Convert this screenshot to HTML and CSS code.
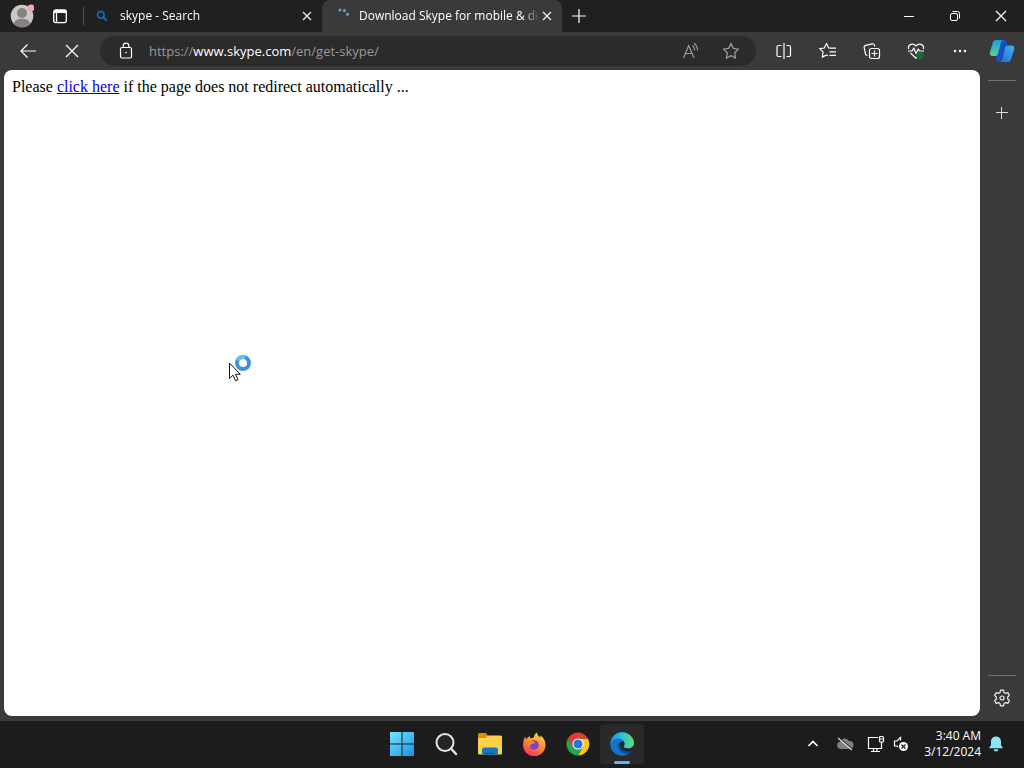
FILE: index.html
```html
<!DOCTYPE html>
<html lang="en">
    <head>
        <meta charset="UTF-8" />
        <title>Download Skype for mobile &amp; desktop</title>
        <link rel="stylesheet" href="styles.css">
    </head>
    <body>

        <header class="tab-bar">
            <button class="profile" aria-label="Profile">
                <svg width="24" height="24" viewBox="0 0 24 24">
                    <circle cx="12" cy="12" r="11.3" fill="#c9c8c7"/>
                    <circle cx="12" cy="9" r="5" fill="#85817f"/>
                    <path d="M4 20c0-7 16-7 16 0a11 11 0 0 1-16 0z" fill="#85817f"/>
                    <circle cx="21" cy="4" r="3.4" fill="#f3a5b2"/>
                </svg>
            </button>
            <button class="workspaces" aria-label="Tab actions">
                <svg width="16" height="16" viewBox="0 0 16 16" fill="none" stroke="#fff" stroke-width="1.3">
                    <rect x="1.7" y="2" width="12.6" height="12.6" rx="2"/>
                    <path d="M2 3.5h12" stroke-width="3"/>
                    <path d="M4.5 4v10"/>
                </svg>
            </button>
            <span class="divider"></span>
            <div class="tab">
                <svg class="tab-icon" width="12" height="12" viewBox="0 0 12 12" fill="none" stroke="#1b66ac" stroke-width="1.8">
                    <circle cx="4.8" cy="4.8" r="3.3"/>
                    <path d="M7.2 7.2l3.6 3.6" stroke-width="2.2"/>
                </svg>
                <span class="tab-title">skype - Search</span>
                <button class="tab-close" aria-label="Close tab">
                    <svg width="10" height="10" viewBox="0 0 10 10" stroke="#eee" stroke-width="1.3"><path d="M1 1l8 8M9 1l-8 8"/></svg>
                </button>
            </div>
            <div class="tab active">
                <svg class="tab-icon" width="16" height="16" viewBox="0 0 16 16" fill="#6ba3bd">
                    <circle cx="4" cy="2" r="1.5"/>
                    <circle cx="8.5" cy="2.6" r="1.5"/>
                    <circle cx="11.5" cy="6.3" r="1.5"/>
                </svg>
                <span class="tab-title">Download Skype for mobile &amp; desktop</span>
                <button class="tab-close" aria-label="Close tab">
                    <svg width="10" height="10" viewBox="0 0 10 10" stroke="#eee" stroke-width="1.3"><path d="M1 1l8 8M9 1l-8 8"/></svg>
                </button>
            </div>
            <button class="new-tab" aria-label="New tab">
                <svg width="14" height="14" viewBox="0 0 14 14" stroke="#fff" stroke-width="1.2"><path d="M7 0v14M0 7h14"/></svg>
            </button>
            <div class="window-buttons">
                <button aria-label="Minimize">
                    <svg width="10" height="10" viewBox="0 0 10 10" stroke="#fff"><path d="M0 5.5h10"/></svg>
                </button>
                <button aria-label="Restore">
                    <svg width="12" height="12" viewBox="0 0 12 12" fill="none" stroke="#fff">
                        <rect x="1.5" y="3.5" width="7" height="7" rx="1.5"/>
                        <path d="M3.5 1.5h5a2 2 0 0 1 2 2v5"/>
                    </svg>
                </button>
                <button aria-label="Close">
                    <svg width="12" height="12" viewBox="0 0 12 12" stroke="#fff" stroke-width="1.2"><path d="M1 1l10 10M11 1L1 11"/></svg>
                </button>
            </div>
        </header>

        <nav class="toolbar">
            <button class="tool" aria-label="Back">
                <svg width="18" height="18" viewBox="0 0 18 18" fill="none" stroke="#fff" stroke-width="1.2"><path d="M17 9H2M8.5 2.5L2 9l6.5 6.5"/></svg>
            </button>
            <button class="tool" aria-label="Stop">
                <svg width="14" height="14" viewBox="0 0 14 14" stroke="#fff" stroke-width="1.2"><path d="M1 1l12 12M13 1L1 13"/></svg>
            </button>
            <div class="address">
                <svg width="14" height="18" viewBox="0 0 14 18" fill="none" stroke="#fff" stroke-width="1.2">
                    <rect x="1.5" y="5.5" width="11" height="10.5" rx="1.5"/>
                    <path d="M4.2 5.5V4a2.8 2.8 0 0 1 5.6 0v1.500"/>
                    <circle cx="7" cy="10.5" r=".6" fill="#fff" stroke-width=".5"/>
                </svg>
                <span class="url">https://<b>www.skype.com</b>/en/get-skype/</span>
                <button aria-label="Read aloud">
                    <svg width="18" height="18" viewBox="0 0 18 18" fill="none" stroke="#9a9a9a" stroke-width="1.2">
                        <path d="M1.5 16L6.7 3.5 12 16M3.5 11.5h6.6"/>
                        <path d="M10.5 3.5a6 6 0 0 1 2.2 5M12 1.2a9 9 0 0 1 3.6 7.3"/>
                    </svg>
                </button>
                <button aria-label="Add to favorites">
                    <svg width="18" height="18" viewBox="0 0 18 18" fill="none" stroke="#9a9a9a" stroke-width="1.3" stroke-linejoin="round">
                        <path d="M9 1.5l2.3 4.9 5.2.7-3.8 3.7.9 5.4L9 13.6l-4.6 2.6.9-5.4L1.5 7.1l5.2-.7z"/>
                    </svg>
                </button>
            </div>
            <button class="tool" aria-label="Split screen">
                <svg width="18" height="18" viewBox="0 0 18 18" fill="none" stroke="#fff" stroke-width="1.2">
                    <path d="M6.5 3.5h-3A1.500 1.500 0 0 0 2 5v8a1.500 1.500 0 0 0 1.500 1.500h3M11.500 3.500H14A1.500 1.500 0 0 1 15.500 5v8a1.500 1.500 0 0 1-1.500 1.500h-2.500M9 1v16"/>
                </svg>
            </button>
            <button class="tool" aria-label="Favorites">
                <svg width="18" height="18" viewBox="0 0 18 18" fill="none" stroke="#fff" stroke-width="1.2" stroke-linejoin="round">
                    <path d="M10.5 6.2L9.700 6 7.500 1.500 5.300 6l-4.600.7 3.400 3.400-.8 5L7.500 13l1.500.7"/>
                    <path d="M10.5 6.2H17M10.500 9.800H17M10.500 13.400H17"/>
                </svg>
            </button>
            <button class="tool" aria-label="Collections">
                <svg width="18" height="18" viewBox="0 0 18 18" fill="none" stroke="#fff" stroke-width="1.2">
                    <rect x="6.5" y="6.5" width="10" height="10" rx="2"/>
                    <path d="M11.5 8.5v6M8.5 11.5h6M4.5 13.5a2 2 0 0 1-2-1.6L1.200 5.600a2 2 0 0 1 1.500-2.300l6.500-1.500a2 2 0 0 1 2.300 1.500l.2 1"/>
                </svg>
            </button>
            <button class="tool" aria-label="Browser essentials">
                <svg width="18" height="18" viewBox="0 0 18 18" fill="none" stroke="#fff" stroke-width="1.2" stroke-linejoin="round">
                    <path d="M1.5 7C.8 2 6.500.8 9 4c2.500-3.200 8.200-2 7.500 3M3.500 11L9 16.200l1.500-1.400"/>
                    <path d="M1 9h4l1.800-3L9 11.500 11.300 7l1.200 2H17"/>
                    <circle cx="13" cy="13.500" r="3.700" fill="#12702c" stroke="none"/>
                </svg>
            </button>
            <button class="tool" aria-label="Settings and more">
                <svg width="16" height="16" viewBox="0 0 16 16" fill="#fff"><circle cx="3" cy="8" r="1.2"/><circle cx="8" cy="8" r="1.2"/><circle cx="13" cy="8" r="1.2"/></svg>
            </button>
            <button class="copilot" aria-label="Copilot">
                <svg width="26" height="24" viewBox="0 0 26 24">
                    <defs>
                        <linearGradient id="copilotLeft" x1="0" y1="0" x2="0" y2="1">
                            <stop offset="0" stop-color="#1d9ce0"/>
                            <stop offset="1" stop-color="#5fd08e"/>
                        </linearGradient>
                        <linearGradient id="copilotRight" x1="0" y1="1" x2="1" y2="0">
                            <stop offset="0" stop-color="#2166e8"/>
                            <stop offset="1" stop-color="#3fb4f6"/>
                        </linearGradient>
                    </defs>
                    <path d="M7 1h8q2.500 0 3 2.500l.8 3H16L11.500 23H10q-2 0-2.500-2L6 15z" fill="#1550c8"/>
                    <path d="M7 1h7q-1.500.5-2 2L9 15q-.6 2-2.600 2H4q-4 0-3-4L4 3q.8-2 3-2z" fill="url(#copilotLeft)"/>
                    <path d="M18 6.500h4q4 0 3 4l-3 10q-.8 2.500-3 2.500h-8q1.500-.5 2-2.500l3-12q.5-2 2-2z" fill="url(#copilotRight)"/>
                </svg>
            </button>
        </nav>

        <div class="browser-body">
            <main class="page">
                Please <a href="#">click here</a> if the page does not redirect automatically ...
            </main>
            <aside class="sidebar">
                <hr>
                <button aria-label="Customize">
                    <svg width="12" height="12" viewBox="0 0 12 12" stroke="#ddd"><path d="M5.500 0v12M0 5.500h12"/></svg>
                </button>
                <hr class="bottom-line">
                <button aria-label="Settings">
                    <svg width="18" height="18" viewBox="0 0 18 18" fill="none" stroke="#eee" stroke-width="1.2" stroke-linejoin="round">
                        <path d="M7.5 1.2h3l.5 2.300 1.600.9 2.200-.8 1.600 2.700-1.700 1.700v2l1.700 1.700-1.600 2.700-2.200-.8-1.600.9-.5 2.300h-3L7 14.500l-1.600-.9-2.200.8-1.600-2.700L3.300 10V8L1.600 6.300l1.600-2.700 2.200.8L7 3.500z"/>
                        <circle cx="9" cy="9" r="2"/>
                    </svg>
                </button>
            </aside>
        </div>

        <footer class="taskbar">
            <div class="apps">
                <button aria-label="Start">
                    <svg width="24" height="24" viewBox="0 0 24 24">
                        <linearGradient id="winFill" gradientUnits="userSpaceOnUse" x1="0" y1="0" x2="24" y2="24">
                            <stop offset="0" stop-color="#79e4fb"/>
                            <stop offset="1" stop-color="#1593e8"/>
                        </linearGradient>
                        <path d="M0 0h11.500v11.500H0zM12.500 0H24v11.500H12.500zM0 12.500h11.500V24H0zM12.500 12.500H24V24H12.500z" fill="url(#winFill)"/>
                    </svg>
                </button>
                <button aria-label="Search">
                    <svg width="24" height="24" viewBox="0 0 24 24" fill="none" stroke="#e4e4e4">
                        <circle cx="11" cy="10.5" r="8.500" fill="#242424" stroke-width="2"/>
                        <path d="M17 16.500l5 5.500" stroke-width="2.500" stroke-linecap="round"/>
                    </svg>
                </button>
                <button aria-label="File Explorer">
                    <svg width="24" height="24" viewBox="0 0 24 24">
                        <path d="M0 2.500Q0 1 1.500 1h6L10 3.500V8H0z" fill="#d98e10"/>
                        <path d="M0 6h7.500L10 3.500h12.500q1.500 0 1.500 1.500v16q0 1.500-1.500 1.500h-21Q0 22.500 0 21z" fill="#ffd04c"/>
                        <path d="M4 22.500V18q0-2.500 2.500-2.500h11q2.500 0 2.500 2.500v4.500z" fill="#1576c5"/>
                        <path d="M7 22.500V21.500q0-1 1-1h8q1 0 1 1v1z" fill="#0d61ab"/>
                    </svg>
                </button>
                <button aria-label="Firefox">
                    <svg width="24" height="24" viewBox="0 0 24 24">
                        <linearGradient id="foxFill" x1=".8" y1="0" x2=".3" y2="1">
                            <stop offset="0" stop-color="#ffe14a"/>
                            <stop offset=".5" stop-color="#ff8a26"/>
                            <stop offset="1" stop-color="#f7306b"/>
                        </linearGradient>
                        <path d="M3 4.500l1 2.700L7.500 4l1.200 2.500L12 5.200Q12 2 14.800.5q.6 3.300 3.200 5l.7-2q4.800 4 4.800 9.500a11.200 11.200 0 0 1-22.500 0Q1 8 3 4.500z" fill="url(#foxFill)"/>
                        <circle cx="12" cy="13" r="4.800" fill="#7b45d1"/>
                        <path d="M5.500 8.500q4-.5 6 1.200l2 .5q-1 1.500-3.500 1.500-2.500 1-2 4-2.500-2-2.500-7.200z" fill="#ff8a2c"/>
                    </svg>
                </button>
                <button aria-label="Chrome">
                    <svg width="24" height="24" viewBox="0 0 24 24">
                        <path d="M12 6.500h9.960A11.500 11.500 0 0 1 12 23.500l4.800-8.700z" fill="#fcc61b"/>
                        <path d="M2.040 6.250A11.500 11.500 0 0 0 12 23.500l4.800-8.700L12 12l-4.800 2.800z" fill="#2ba24c"/>
                        <path d="M2.040 6.250Q5.500 1 12 .5q6.500.5 9.960 6H12L7 14.800z" fill="#e23c31"/>
                        <circle cx="12" cy="12" r="5.600" fill="#fff"/>
                        <circle cx="12" cy="12" r="4.500" fill="#2872e5"/>
                    </svg>
                </button>
                <button class="running" aria-label="Edge">
                    <svg width="24" height="24" viewBox="0 0 24 24">
                        <linearGradient id="edgeTop" x1="0" y1="0" x2="1" y2="0">
                            <stop offset="0" stop-color="#1794dc"/>
                            <stop offset=".5" stop-color="#2fc0d8"/>
                            <stop offset="1" stop-color="#65dc65"/>
                        </linearGradient>
                        <circle cx="12" cy="12" r="11.8" fill="#1273c8"/>
                        <path d="M.3 12C1 5 6 .2 12 .2c7 0 12 5.500 12 10.500 0 3.500-2.500 5.800-6 5.800-3 0-4.500-1-4.500-2 0-.8 1-1 1-3C14.500 9 12 6.500 8.500 6.500c-4 0-7 2-8.200 5.500z" fill="url(#edgeTop)"/>
                        <path d="M9 9.800c-2.500 5 1 12 7.500 12.200 2 0 4-.9 5.200-2.500.8-1-.2-1.700-1.200-1.200-5 2-11-.8-11.500-8.500z" fill="#0b4a91"/>
                        <path d="M14.5 11.500c0 2-1 2.200-1 3s1.500 2 4.500 2c2.200 0 4-.8 5-2.200l1.500 1-2.500 3.500q-3 1.200-6.500.2c-4-1-6.200-4-5.700-7.500 1-3 4.700-3 4.700 0z" fill="#242424"/>
                    </svg>
                </button>
            </div>
            <div class="tray">
                <button aria-label="Show hidden icons">
                    <svg width="12" height="12" viewBox="0 0 12 12" fill="none" stroke="#fff" stroke-width="1.6"><path d="M1.5 8L6 3.500 10.500 8"/></svg>
                </button>
                <button aria-label="OneDrive">
                    <svg width="18" height="16" viewBox="0 0 18 16">
                        <path d="M4.500 13a3.700 3.700 0 0 1-.5-7.300 5 5 0 0 1 9-.7 4 4 0 0 1 1 8z" fill="#808080"/>
                        <path d="M2.500 1.500l14 12" stroke="#1c1c1c" stroke-width="1.500"/>
                        <path d="M2 2l14 12" stroke="#ddd" stroke-width="1.2"/>
                    </svg>
                </button>
                <button class="network" aria-label="Network and sound">
                    <svg width="18" height="18" viewBox="0 0 18 18" fill="none" stroke="#fff" stroke-width="1.2">
                        <path d="M11 2.500H1.500v11h13V9M4 16.500h9M6.500 13.500v3M10 13.500v3"/>
                        <rect x="12.500" y="1.500" width="4" height="5.500" rx="1"/>
                        <path d="M12.500 4h4M14.500 7v3"/>
                    </svg>
                    <svg width="16" height="16" viewBox="0 0 16 16" fill="none" stroke="#fff" stroke-width="1.2">
                        <path d="M7.500 4.500v-3L4 5H1.500v5H4l1 1"/>
                        <circle cx="10.500" cy="10.500" r="4.500" fill="#fff" stroke="none"/>
                        <path d="M8.500 8.500l4 4M12.500 8.500l-4 4" stroke="#202020"/>
                    </svg>
                </button>
                <button class="clock">
                    <span>3:40 AM</span>
                    <span>3/12/2024</span>
                </button>
                <button class="bell" aria-label="Notifications">
                    <svg width="14" height="16" viewBox="0 0 14 16" fill="#8ce4f4"><path d="M7 .5c3 0 5 2.200 5 5v3.800l1.700 2.200v.8H.3v-.8L2 9.300V5.500c0-2.800 2-5 5-5zM4.700 13.200h4.600a2.300 2.300 0 0 1-4.600 0z"/></svg>
                </button>
            </div>
        </footer>

        <svg class="pointer" width="24" height="28" viewBox="0 0 24 28">
            <circle cx="15" cy="8" r="6" fill="#fff" stroke="#3c93dc" stroke-width="4"/>
            <path d="M9.500 5.400A6 6 0 0 1 17 2.400" fill="none" stroke="#6fc1ef" stroke-width="4"/>
            <path d="M1.500 8v15.500l3.500-3.300 2.600 5.500 2.400-1.100-2.500-5.300h4.800z" fill="#fff" stroke="#111"/>
        </svg>

    </body>
</html>
```
FILE: styles.css
```css
body {
    margin: 0;
    height: 100vh;
    display: flex;
    flex-direction: column;
    overflow: hidden;
    font-family: 'Open Sans', 'Noto Sans', sans-serif;
    font-size: 12px;
    color: #fff;
    background-color: #3a3a3a;
}

button {
    display: flex;
    align-items: center;
    justify-content: center;
    flex-shrink: 0;
    padding: 0;
    border: none;
    background: none;
    color: inherit;
    font: inherit;
}

svg {
    display: block;
    flex-shrink: 0;
}

/* tabs */
.tab-bar {
    display: flex;
    height: 32px;
    background-color: #202020;
}

.profile {
    width: 44px;
}

.workspaces {
    width: 32px;
}

.divider {
    width: 1px;
    height: 18px;
    margin: 7px 6px 0 7px;
    background-color: #505050;
}

.tab {
    display: flex;
    align-items: center;
    box-sizing: border-box;
    width: 232px;
    padding: 0 7px 0 6px;
}

.tab.active {
    width: 240px;
    padding-left: 14px;
    border-radius: 8px 8px 0 0;
    background-color: #3a3a3a;
}

.tab-icon {
    margin-right: 12px;
}

.active .tab-icon {
    margin-right: 7px;
}

.tab-title {
    flex: 1;
    min-width: 0;
    overflow: hidden;
    white-space: nowrap;
    line-height: 18px;
    -webkit-mask-image: linear-gradient(to left, transparent, #000 16px);
    mask-image: linear-gradient(to left, transparent, #000 16px);
}

.tab-close {
    width: 16px;
    height: 16px;
}

.new-tab {
    width: 34px;
}

.window-buttons {
    display: flex;
    margin-left: auto;
}

.window-buttons button {
    width: 46px;
}

/* toolbar */
.toolbar {
    display: flex;
    align-items: center;
    height: 38px;
    padding: 0 2px 0 6px;
    background-color: #3a3a3a;
}

.tool {
    width: 44px;
    height: 30px;
}

.address {
    flex: 1;
    display: flex;
    align-items: center;
    height: 30px;
    margin: 0 6px;
    padding: 0 5px 0 19px;
    border-radius: 15px;
    background-color: #2b2b2b;
}

.address button {
    width: 40px;
    height: 30px;
}

.url {
    flex: 1;
    margin-left: 16px;
    font-size: 13px;
    line-height: 20px;
    color: #999;
}

.url b {
    font-weight: 500;
    color: #fff;
}

.copilot {
    width: 40px;
    height: 30px;
}

/* page and sidebar */
.browser-body {
    flex: 1;
    display: flex;
    min-height: 0;
}

.page {
    flex: 1;
    margin: 0 0 5px 4px;
    padding: 8px;
    border-radius: 8px;
    background-color: #fff;
    color: #000;
    font-family: 'Liberation Serif', serif;
    font-size: 16px;
    line-height: 18px;
}

.page a {
    color: #0000dd;
}

.sidebar {
    display: flex;
    flex-direction: column;
    align-items: center;
    width: 44px;
    padding: 10px 0 5px;
    box-sizing: border-box;
}

.sidebar hr {
    width: 28px;
    height: 1px;
    margin: 0;
    border: none;
    background-color: #707070;
}

.sidebar button {
    width: 36px;
    height: 36px;
}

.sidebar hr + button {
    margin-top: 14px;
}

.sidebar .bottom-line {
    margin-top: auto;
}

.sidebar .bottom-line + button {
    margin-top: 4px;
}

/* taskbar */
.taskbar {
    display: grid;
    grid-template-columns: 1fr auto 1fr;
    align-items: center;
    height: 46px;
    padding-bottom: 1px;
    background-color: #1c1c1c;
}

.apps {
    grid-column: 2;
    display: flex;
}

.apps button {
    width: 44px;
    height: 40px;
}

.apps .running {
    position: relative;
    border-radius: 4px;
    background-color: #292929;
}

.running::after {
    content: "";
    position: absolute;
    bottom: 0;
    width: 16px;
    height: 3px;
    border-radius: 2px;
    background-color: #62b5ea;
}

.tray {
    display: flex;
    align-items: center;
    justify-content: flex-end;
    padding-right: 21px;
}

.tray button {
    width: 32px;
    height: 40px;
}

.tray .network {
    width: 54px;
    gap: 8px;
}

.tray .clock {
    flex-direction: column;
    align-items: flex-end;
    width: auto;
    margin-left: 9px;
    line-height: 16px;
}

.tray .bell {
    width: 14px;
    margin-left: 8px;
}

/* mouse pointer with the busy ring */
.pointer {
    position: absolute;
    left: 228px;
    top: 355px;
}
```
